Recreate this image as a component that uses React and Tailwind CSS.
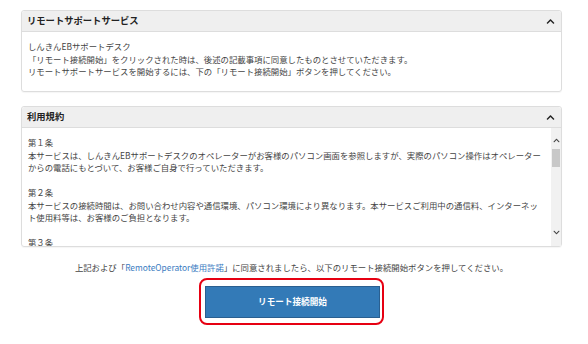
import React from "react";
import { FaChevronUp, FaChevronDown } from "react-icons/fa";

const font = { fontFamily: '"Noto Sans CJK JP", "Noto Sans", sans-serif' };

const articles = [
  {
    title: "第１条",
    lines: [
      "本サービスは、しんきんEBサポートデスクのオペレーターがお客様のパソコン画面を参照しますが、実際のパソコン操作はオペレーター",
      "からの電話にもとづいて、お客様ご自身で行っていただきます。",
    ],
  },
  {
    title: "第２条",
    lines: [
      "本サービスの接続時間は、お問い合わせ内容や通信環境、パソコン環境により異なります。本サービスご利用中の通信料、インターネッ",
      "ト使用料等は、お客様のご負担となります。",
    ],
  },
  {
    title: "第３条",
    lines: [
      "本サービスの利用により生じた損害について、当金庫は一切の責任を負わないものとします。",
    ],
  },
];

const PanelHeader = ({ title }) => (
  <div className="flex items-center justify-between h-[21px] pl-[5px] pr-[6px] bg-[#efefef] border-b border-[#dddddd] rounded-t-[3px]">
    <span className="text-[9.3px] font-bold text-[#222]">{title}</span>
    <FaChevronUp className="w-[9px] h-[9px] text-[#222]" />
  </div>
);

const App = () => {
  return (
    <div
      className="w-[588px] h-[344px] bg-white pl-[21px] pr-[26px] pt-[10px] text-[#444] overflow-hidden"
      style={font}
    >
      {/* リモートサポートサービス */}
      <div className="border border-[#dddddd] rounded-[3px] shadow-[0_1px_1px_rgba(0,0,0,0.04)]">
        <PanelHeader title="リモートサポートサービス" />
        <div className="h-[59px] pl-[6px] pt-[8px] text-[8.4px] leading-[12.5px] whitespace-nowrap">
          <p>しんきんEBサポートデスク</p>
          <p>「リモート接続開始」をクリックされた時は、後述の記載事項に同意したものとさせていただきます。</p>
          <p>リモートサポートサービスを開始するには、下の「リモート接続開始」ボタンを押してください。</p>
        </div>
      </div>

      {/* 利用規約 */}
      <div className="mt-[14px] border border-[#dddddd] rounded-[3px] shadow-[0_1px_1px_rgba(0,0,0,0.04)]">
        <PanelHeader title="利用規約" />
        <div className="flex h-[118px]">
          <div className="flex-1 overflow-hidden pl-[6px] pt-[8px] text-[8.4px] leading-[12.5px] whitespace-nowrap">
            {articles.map((a) => (
              <div key={a.title} className="mb-[12.5px]">
                <p>{a.title}</p>
                {a.lines.map((l) => (
                  <p key={l}>{l}</p>
                ))}
              </div>
            ))}
          </div>
          {/* scrollbar */}
          <div className="w-[10px] bg-[#f1f1f1] flex flex-col items-center">
            <FaChevronUp className="w-[7px] h-[7px] mt-[9px] text-[#444]" />
            <div className="w-[8px] h-[18px] mt-[5px] bg-[#c8c8c8]" />
            <div className="flex-1" />
            <FaChevronDown className="w-[7px] h-[7px] mb-[10px] text-[#444]" />
          </div>
        </div>
      </div>

      <p className="mt-[14px] text-center text-[8.4px] leading-[12.5px] whitespace-nowrap">
        上記および「<span className="text-[#3a7bbf]">RemoteOperator使用許諾</span>」に同意されましたら、以下のリモート接続開始ボタンを押してください。
      </p>

      <div className="flex justify-center mt-[4px]">
        <div className="w-[185px] h-[47px] border-2 border-[#e60012] rounded-[8px] pl-[4px] pr-[2px] pt-[6px]">
          <button className="w-full h-[32px] bg-[#337ab7] border border-[#2a5f90] text-white text-[8.6px] font-bold">
            リモート接続開始
          </button>
        </div>
      </div>
    </div>
  );
};

export default App;
